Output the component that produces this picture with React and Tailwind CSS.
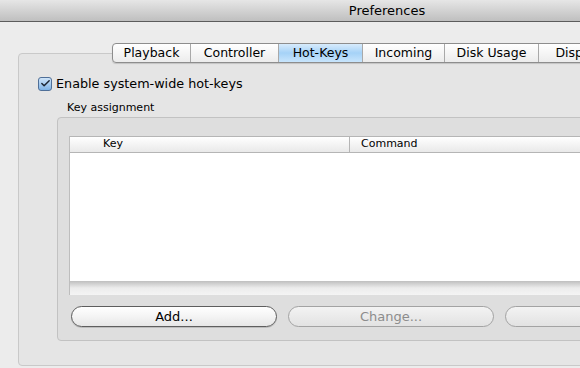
import { Check } from 'lucide-react';

const tabs = [
  { label: 'Playback', w: 'w-[77px]' },
  { label: 'Controller', w: 'w-[88px]' },
  { label: 'Hot-Keys', w: 'w-[84px]', active: true },
  { label: 'Incoming', w: 'w-[82px]' },
  { label: 'Disk Usage', w: 'w-[94px]' },
  { label: 'Display', w: 'w-[80px]' },
];

function Tab({ label, w, active, first }) {
  return (
    <div
      className={
        'flex items-center justify-center h-full ' +
        w +
        (first ? '' : ' border-l border-[#a9a9a9]') +
        (active
          ? ' bg-gradient-to-b from-[#d7ebfc] via-[#a5d2f7] to-[#c8e5fc]'
          : '')
      }
    >
      {label}
    </div>
  );
}

function PushButton({ children, disabled }) {
  return (
    <button
      className={
        'w-[206px] h-[21px] rounded-full border text-[13px] leading-none ' +
        (disabled
          ? 'border-[#a3a3a3] text-[#8c8c8c] bg-gradient-to-b from-[#f3f3f3] to-[#e2e2e2]'
          : 'border-[#5e5e5e] text-black bg-gradient-to-b from-white via-[#f4f4f4] to-[#e6e6e6] shadow-[0_1px_0_rgba(0,0,0,0.15)]')
      }
    >
      {children}
    </button>
  );
}

export default function App() {
  return (
    <div
      className="w-[580px] h-[368px] overflow-hidden bg-[#ececec] text-black"
      style={{ fontFamily: "'DejaVu Sans', sans-serif" }}
    >
      <div className="w-[774px]">
        {/* Заголовок окна */}
        <div className="h-[22px] flex items-center justify-center border-b border-[#5c5c5c] bg-gradient-to-b from-[#e6e6e6] to-[#bfbfbf] text-[13px]">
          Preferences
        </div>

        <div className="pl-[18px] pt-[21px]">
          {/* Вкладки */}
          <div className="relative z-10 ml-[94px] flex h-[20px] w-fit overflow-hidden rounded-[4px] border border-[#8d8d8d] bg-gradient-to-b from-white to-[#ececec] text-[12.5px] shadow-[0_1px_1px_rgba(0,0,0,0.15)]">
            {tabs.map((t, i) => (
              <Tab key={t.label} {...t} first={i === 0} />
            ))}
          </div>

          {/* Панель вкладки */}
          <div className="-mt-[10px] h-[313px] rounded-[4px] border border-[#c9c9c9] bg-[#e5e5e5] pl-[19px] pt-[22px]">
            <label className="flex items-center gap-[4px] h-[16px] text-[12.75px]">
              <span className="flex h-[14px] w-[14px] items-center justify-center rounded-[3px] border border-[#4f6f98] bg-gradient-to-b from-[#cfe4f8] to-[#7fb3e6]">
                <Check size={13} strokeWidth={3.2} className="text-[#1c2533] -mt-[2px] ml-[1px]" />
              </span>
              Enable system-wide hot-keys
            </label>

            <div className="mt-[9px] ml-[29px] text-[11px] leading-[14px]">Key assignment</div>

            {/* Группа назначения клавиш */}
            <div className="mt-[2px] ml-[19px] h-[224px] rounded-[4px] border border-[#c2c2c2] bg-[#dedede] pl-[11px] pt-[18px]">
              <div className="border-l border-[#bdbdbd]">
                <div className="flex h-[17px] items-center border-y border-[#b5b5b5] bg-gradient-to-b from-white to-[#e9e9e9] text-[11px]">
                  <div className="w-[280px] h-full flex items-center pl-[33px] border-r border-[#b5b5b5]">Key</div>
                  <div className="pl-[11px]">Command</div>
                </div>
                <div className="h-[128px] bg-white" />
                <div className="h-[14px] bg-gradient-to-b from-[#bfbfbf] via-[#ececec] to-[#f4f4f4]" />
              </div>

              <div className="mt-[11px] flex gap-[11px] pl-[2px]">
                <PushButton>Add...</PushButton>
                <PushButton disabled>Change...</PushButton>
                <PushButton disabled />
              </div>
            </div>
          </div>
        </div>
      </div>
    </div>
  );
}
